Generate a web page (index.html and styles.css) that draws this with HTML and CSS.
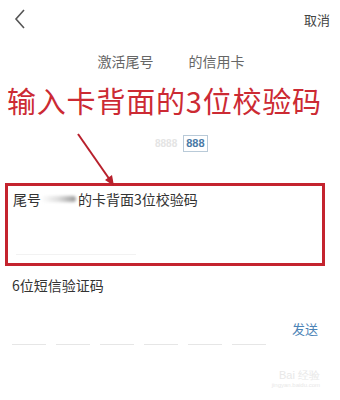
FILE: index.html
```html
<!DOCTYPE html>
<html lang="zh">
<head>
<meta charset="utf-8">
<link rel="stylesheet" href="styles.css">
</head>
<body>
<div class="page">
  <header class="topbar">
    <svg class="back" width="12" height="20" viewBox="0 0 12 20"><polyline points="10,1 2,10 10,19" fill="none" stroke="#555" stroke-width="1.6"/></svg>
    <span class="cancel">取消</span>
  </header>
  <div class="title"><span>激活尾号</span><span class="gap"></span><span>的信用卡</span></div>
  <div class="note">输入卡背面的3位校验码</div>
  <div class="codes"><span class="faded">8888</span><span class="box">888</span></div>
  <div class="redbox">
    <div class="cvv-label"><span>尾号</span><span class="blur"></span><span>的卡背面3位校验码</span></div>
    <div class="faint-line"></div>
  </div>
  <div class="sms-label">6位短信验证码</div>
  <div class="send-row"><span class="send">发送</span></div>
  <div class="dashes"><i></i><i></i><i></i><i></i><i></i><i></i></div>
  <div class="watermark"><span class="wm1">Bai 经验</span><span class="wm2">jingyan.baidu.com</span></div>
  <svg class="arrow" width="60" height="70" viewBox="0 0 60 70">
    <line x1="6" y1="4" x2="38" y2="50" stroke="#b8202c" stroke-width="2"/>
    <polygon points="42,56 33,50 40,45" fill="#b8202c"/>
  </svg>
</div>
</body>
</html>
```
FILE: styles.css
```css
html, body {
  margin: 0;
  padding: 0;
  background: #fff;
}
.page {
  position: relative;
  width: 340px;
  height: 400px;
  overflow: hidden;
  font-family: "Noto Sans CJK SC", "Noto Sans", sans-serif;
  color: #333;
}
.topbar {
  display: flex;
  align-items: center;
  justify-content: space-between;
  height: 38px;
  padding: 0 10px 0 14px;
}
.back { display: block; margin-top: -1px; }
.cancel {
  font-size: 13px;
  color: #444;
}
.title {
  display: flex;
  justify-content: center;
  font-size: 14px;
  color: #666;
  margin-top: 12px;
  line-height: 22px;
  padding-left: 2px;
}
.title .gap { width: 35px; }
.note {
  margin-top: 11px;
  padding-left: 7px;
  font-size: 29px;
  line-height: 34px;
  color: #cc2a33;
  letter-spacing: 0.8px;
}
.codes {
  display: flex;
  align-items: center;
  gap: 6px;
  margin-top: 17px;
  padding-left: 155px;
  height: 18px;
}
.faded {
  font-family: "Liberation Sans", sans-serif;
  font-weight: bold;
  font-size: 10px;
  color: #e4e4e4;
}
.box {
  font-family: "Liberation Sans", sans-serif;
  font-weight: bold;
  font-size: 11px;
  color: #4a7aa6;
  border: 1px solid #b9cad8;
  padding: 1px 2px;
  line-height: 13px;
}
.redbox {
  margin: 31px 15px 0 5px;
  height: 77px;
  border: 3px solid #c4232e;
  position: relative;
}
.cvv-label {
  display: flex;
  align-items: center;
  font-size: 14px;
  color: #333;
  padding: 3px 0 0 5px;
  line-height: 20px;
}
.blur {
  width: 35px;
  height: 6px;
  margin-right: 2px;
  background: linear-gradient(90deg, #fff 0%, #ddd 50%, #999 100%);
  border-radius: 3px;
  filter: blur(1.5px);
}
.faint-line {
  position: absolute;
  left: 8px;
  bottom: 8px;
  width: 120px;
  height: 1px;
  background: #f2f2f2;
}
.sms-label {
  font-size: 14px;
  padding-left: 12px;
  margin-top: 8px;
  line-height: 22px;
  color: #333;
}
.send-row {
  display: flex;
  justify-content: flex-end;
  padding-right: 22px;
  margin-top: 24px;
}
.send {
  font-size: 13px;
  color: #4c83b6;
  line-height: 18px;
}
.dashes {
  display: flex;
  gap: 10px;
  padding-left: 12px;
  margin-top: 6px;
}
.dashes i {
  display: block;
  width: 34px;
  height: 1px;
  background: #e6e6e6;
}
.watermark {
  display: flex;
  flex-direction: column;
  align-items: flex-end;
  padding-right: 20px;
  margin-top: 24px;
  color: #e8e8e8;
}
.wm1 { font-family: "Liberation Sans", sans-serif; font-size: 11px; line-height: 12px; }
.wm2 { font-family: "Liberation Sans", sans-serif; font-size: 6px; line-height: 8px; }
.arrow {
  position: absolute;
  left: 72px;
  top: 130px;
}
```
